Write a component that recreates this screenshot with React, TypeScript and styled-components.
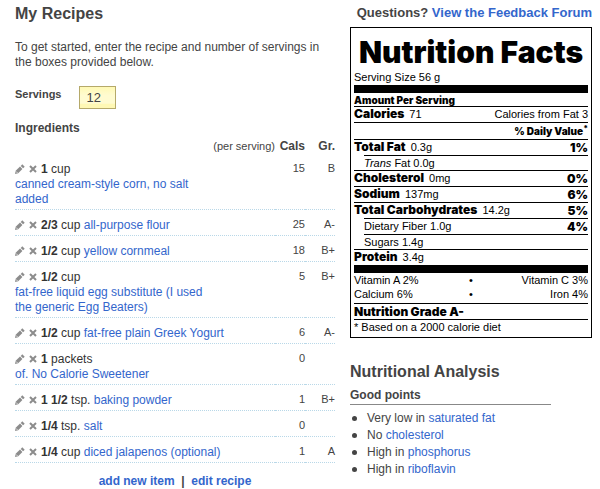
import React from "react";
import styled, { createGlobalStyle } from "styled-components";

const GlobalStyle = createGlobalStyle`
  *, *::before, *::after { box-sizing: border-box; }
  body {
    margin: 0;
    background: #fff;
    color: #444;
    font: 12px/15px "Liberation Sans", Arial, sans-serif;
  }
`;

const Page = styled.div`
  display: grid;
  grid-template-columns: 320fr 242fr;
  gap: 15px;
  padding: 4px 8px 0 15px;
`;

const Column = styled.div`
  min-width: 0;
`;

const Title = styled.h2<{ $top?: number }>`
  margin: ${(p) => p.$top ?? 0}px 0 0;
  font-size: 16px;
  line-height: 20px;
`;

const Intro = styled.p`
  margin: 16px 0;
`;

const ServingsRow = styled.div`
  display: flex;
  align-items: flex-start;
  gap: 18px;
`;

const ServingsLabel = styled.label`
  font-size: 11px;
  font-weight: bold;
  line-height: 17px;
`;

const ServingsInput = styled.input`
  width: 37px;
  height: 23px;
  padding: 0 6px;
  border: 1px solid #b5a96a;
  background: linear-gradient(#fff9b4 0%, #fffbd0 40%, #fffbd0 78%, #fff8b4 80%);
  color: #444;
  font: 13px "Liberation Sans", Arial, sans-serif;
`;

const SectionLabel = styled.h3`
  margin: 12px 0 0;
  font-size: 12px;
  line-height: 15px;
`;

const IngredientTable = styled.table`
  width: 100%;
  border-collapse: collapse;
  table-layout: fixed;
`;

const HeadCell = styled.th<{ $width?: number; $plain?: boolean }>`
  width: ${(p) => (p.$width ? `${p.$width}px` : "auto")};
  padding: 3px 0 0;
  font-size: ${(p) => (p.$plain ? 11 : 12)}px;
  font-weight: ${(p) => (p.$plain ? "normal" : "bold")};
  text-align: right;
`;

const IngredientRow = styled.tr`
  border-bottom: 1px dotted #b9d8e8;
`;

const NameCell = styled.td`
  padding: 8px 46px 2px 0;
  vertical-align: top;
`;

const ValueCell = styled.td`
  padding: 7px 0 3px;
  font-size: 11px;
  text-align: right;
  vertical-align: top;
`;

const IconButton = styled.button`
  display: inline-block;
  margin: 0 4px 0 0;
  padding: 0;
  border: 0;
  background: none;
  color: #8c8c8c;
  line-height: 0;
  vertical-align: -1px;
  cursor: pointer;
`;

const Amount = styled.span`
  color: #333;
`;

const Link = styled.a`
  color: #3366cc;
  text-decoration: none;
`;

const ItemLink = styled(Link)`
  display: inline-block;
  max-width: 200px;
  vertical-align: top;
`;

const Actions = styled.div`
  margin-top: 11px;
  font-weight: bold;
  text-align: center;
`;

const Feedback = styled.div`
  font-size: 13px;
  font-weight: bold;
  line-height: 18px;
  text-align: right;
  white-space: nowrap;
`;

const Panel = styled.section`
  margin-top: 5px;
  padding: 6px 3px 2px;
  border: 1px solid #000;
  color: #000;
  font-size: 11px;
  line-height: 15px;
`;

const Heavy = styled.b<{ $small?: boolean }>`
  font-family: Inter, "Arial Black", sans-serif;
  font-size: ${(p) => (p.$small ? 10 : 12)}px;
  font-weight: 900;
  line-height: 12px;
`;

const FactName = styled(Heavy)`
  margin-right: 2px;
`;

const PanelTitle = styled.h1`
  margin: 0;
  font: 900 30px/36px Inter, "Arial Black", sans-serif;
  text-align: center;
  white-space: nowrap;
`;

const Bar = styled.div`
  height: 8px;
  background: #000;
`;

const Fact = styled.div<{ $height?: number; $last?: boolean }>`
  display: flex;
  align-items: center;
  justify-content: space-between;
  min-height: ${(p) => (p.$height ?? 15) + (p.$last ? 0 : 1)}px;
  border-bottom: ${(p) => (p.$last ? "0" : "1px solid #000")};
`;

const DailyValue = styled(Fact)`
  justify-content: flex-end;

  sup {
    font-size: 8px;
    line-height: 0;
  }
`;

const FactLine = styled.div<{ $sub?: boolean; $rule?: boolean; $short?: boolean }>`
  display: flex;
  align-items: center;
  justify-content: space-between;
  margin-left: ${(p) => (p.$sub ? 10 : 0)}px;
  border-top: ${(p) => (p.$rule ? "1px solid #000" : "0")};
  line-height: ${(p) => (p.$short ? 14 : 15)}px;
`;

const Vitamins = styled.div`
  display: grid;
  grid-template-columns: 1fr auto 1fr;
  padding-bottom: 2px;
  border-bottom: 1px solid #000;
  line-height: 14px;

  & > :nth-child(3n) {
    text-align: right;
  }
`;

const GoodPoints = styled.h3`
  width: 83%;
  margin: 6px 0 0;
  padding-bottom: 1px;
  border-bottom: 1px solid #888;
  font-size: 12px;
  line-height: 15px;
`;

const PointList = styled.ul`
  margin: 5px 0 0;
  padding: 0;
  line-height: 17px;
  list-style: none;
`;

const Point = styled.li`
  display: flex;
  align-items: center;
  padding-left: 2px;

  &::before {
    content: "";
    width: 5px;
    height: 5px;
    margin-right: 10px;
    border-radius: 50%;
    background: #444;
  }
`;

const PencilIcon = () => (
  <svg width="10" height="10" viewBox="0 0 10 10" aria-hidden="true">
    <path d="M0 10 L0.7 6.8 L5 2.6 L7.4 5 L3.2 9.2 Z" fill="currentColor" />
    <path d="M5.7 1.9 L7.3 0.3 L9.7 2.7 L8.1 4.3 Z" fill="currentColor" />
    <path d="M1.2 7.6 L2.4 8.8" stroke="#fff" strokeWidth="0.9" />
  </svg>
);

const CrossIcon = () => (
  <svg width="8" height="10" viewBox="0 0 8 10" fill="none" stroke="currentColor" strokeWidth="2" aria-hidden="true">
    <path d="M1 2 L7 8 M7 2 L1 8" />
  </svg>
);

const ingredients = [
  { qty: "1", unit: "cup", name: "canned cream-style corn, no salt added", cals: 15, grade: "B" },
  { qty: "2/3", unit: "cup", name: "all-purpose flour", cals: 25, grade: "A-" },
  { qty: "1/2", unit: "cup", name: "yellow cornmeal", cals: 18, grade: "B+" },
  { qty: "1/2", unit: "cup", name: "fat-free liquid egg substitute (I used the generic Egg Beaters)", cals: 5, grade: "B+" },
  { qty: "1/2", unit: "cup", name: "fat-free plain Greek Yogurt", cals: 6, grade: "A-" },
  { qty: "1", unit: "packets", name: "of. No Calorie Sweetener", cals: 0, grade: "" },
  { qty: "1 1/2", unit: "tsp.", name: "baking powder", cals: 1, grade: "B+" },
  { qty: "1/4", unit: "tsp.", name: "salt", cals: 0, grade: "" },
  { qty: "1/4", unit: "cup", name: "diced jalapenos (optional)", cals: 1, grade: "A" },
];

const points = [
  { lead: "Very low in", topic: "saturated fat" },
  { lead: "No", topic: "cholesterol" },
  { lead: "High in", topic: "phosphorus" },
  { lead: "High in", topic: "riboflavin" },
];

const facts = [
  { name: "Total Fat", value: "0.3g", daily: "1%" },
  { name: "Trans", value: "Fat 0.0g", sub: true },
  { name: "Cholesterol", value: "0mg", daily: "0%" },
  { name: "Sodium", value: "137mg", daily: "6%" },
  { name: "Total Carbohydrates", value: "14.2g", daily: "5%" },
  { value: "Dietary Fiber 1.0g", daily: "4%", sub: true },
  { value: "Sugars 1.4g", sub: true },
  { name: "Protein", value: "3.4g" },
];

function NutritionPanel() {
  return (
    <Panel>
      <PanelTitle>Nutrition Facts</PanelTitle>
      <div>Serving Size 56 g</div>
      <Bar />
      <Fact $height={13}>
        <Heavy $small>Amount Per Serving</Heavy>
      </Fact>
      <Fact>
        <span>
          <FactName>Calories</FactName> 71
        </span>
        <span>Calories from Fat 3</span>
      </Fact>
      <DailyValue $height={16}>
        <Heavy $small>
          % Daily Value<sup>*</sup>
        </Heavy>
      </DailyValue>
      {facts.map((f, i) => (
        <FactLine key={f.value} $sub={f.sub} $rule={i > 0} $short={f.sub && !f.daily}>
          <span>
            {f.name && (f.sub ? <i>{f.name}</i> : <FactName>{f.name}</FactName>)} {f.value}
          </span>
          {f.daily && <Heavy>{f.daily}</Heavy>}
        </FactLine>
      ))}
      <Bar />
      <Vitamins>
        <span>Vitamin A 2%</span>
        <span>•</span>
        <span>Vitamin C 3%</span>
        <span>Calcium 6%</span>
        <span>•</span>
        <span>Iron 4%</span>
      </Vitamins>
      <Fact>
        <Heavy>Nutrition Grade A-</Heavy>
      </Fact>
      <Fact $last>* Based on a 2000 calorie diet</Fact>
    </Panel>
  );
}

export default function App() {
  return (
    <>
      <GlobalStyle />
      <Page>
        <Column>
          <Title>My Recipes</Title>
          <Intro>To get started, enter the recipe and number of servings in the boxes provided below.</Intro>
          <ServingsRow>
            <ServingsLabel htmlFor="servings">Servings</ServingsLabel>
            <ServingsInput id="servings" defaultValue="12" />
          </ServingsRow>
          <SectionLabel>Ingredients</SectionLabel>
          <IngredientTable>
            <thead>
              <tr>
                <HeadCell $plain>(per serving)</HeadCell>
                <HeadCell $width={30}>Cals</HeadCell>
                <HeadCell $width={30}>Gr.</HeadCell>
              </tr>
            </thead>
            <tbody>
              {ingredients.map((item) => (
                <IngredientRow key={item.name}>
                  <NameCell>
                    <IconButton aria-label={`Edit ${item.name}`}>
                      <PencilIcon />
                    </IconButton>
                    <IconButton aria-label={`Remove ${item.name}`}>
                      <CrossIcon />
                    </IconButton>
                    <Amount>
                      <b>{item.qty}</b> {item.unit}
                    </Amount>{" "}
                    <ItemLink href="#">{item.name}</ItemLink>
                  </NameCell>
                  <ValueCell>{item.cals}</ValueCell>
                  <ValueCell>{item.grade}</ValueCell>
                </IngredientRow>
              ))}
            </tbody>
          </IngredientTable>
          <Actions>
            <Link href="#">add new item</Link> &nbsp;|&nbsp; <Link href="#">edit recipe</Link>
          </Actions>
        </Column>
        <Column>
          <Feedback>
            Questions? <Link href="#">View the Feedback Forum</Link>
          </Feedback>
          <NutritionPanel />
          <Title $top={24}>Nutritional Analysis</Title>
          <GoodPoints>Good points</GoodPoints>
          <PointList>
            {points.map((p) => (
              <Point key={p.topic}>
                <span>
                  {p.lead} <Link href="#">{p.topic}</Link>
                </span>
              </Point>
            ))}
          </PointList>
        </Column>
      </Page>
    </>
  );
}
